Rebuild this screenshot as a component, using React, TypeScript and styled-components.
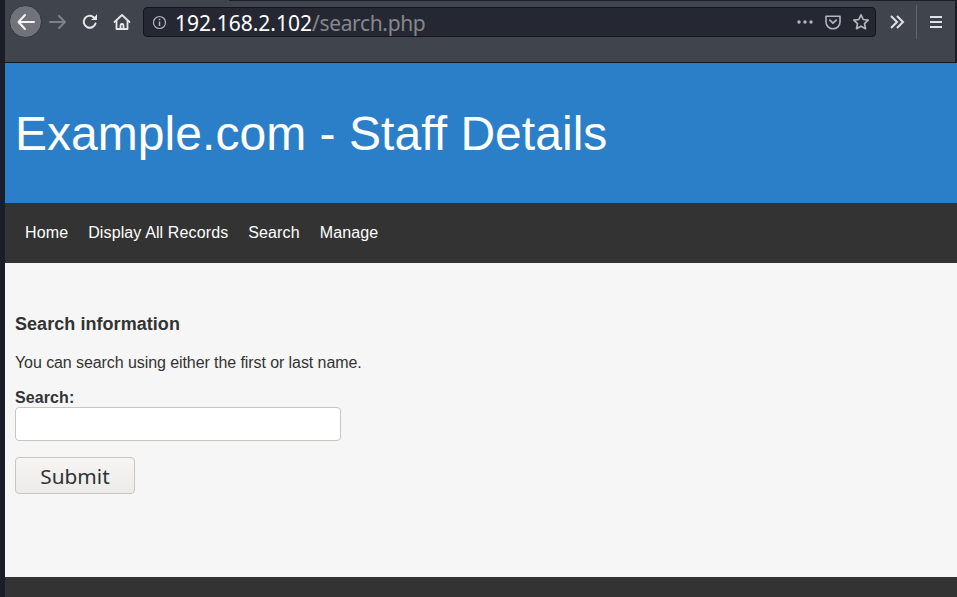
import * as React from 'react';
import styled, { createGlobalStyle } from 'styled-components';

const GlobalStyle = createGlobalStyle`
  html, body {
    margin: 0;
    padding: 0;
    height: 100%;
    background: #1b1e28;
    overflow: hidden;
  }
`;

const Frame = styled.div`
  width: 957px;
  height: 597px;
  display: flex;
  background: #1b1e28;
`;

const Edge = styled.div`
  width: 5px;
  flex: none;
`;

const Window = styled.div`
  flex: 1;
  display: flex;
  flex-direction: column;
  min-width: 0;
`;

const Toolbar = styled.div`
  height: 63px;
  flex: none;
  box-sizing: border-box;
  background: linear-gradient(to right, #40444d 224px, #1b1e28 224px) top / 100% 1px no-repeat, #40444d;
  border-bottom: 1px solid #15171d;
  border-right: 2px solid #1b1e28;
  display: flex;
  align-items: flex-start;
  padding: 5px 0 0 4px;
`;

const NavButton = styled.div<{ $size?: number; $round?: boolean }>`
  width: ${(p) => p.$size ?? 32}px;
  height: ${(p) => (p.$round ? p.$size : 34)}px;
  flex: none;
  display: flex;
  align-items: center;
  justify-content: center;
  border-radius: 50%;
  background: ${(p) => (p.$round ? '#70737a' : 'transparent')};
  border: ${(p) => (p.$round ? '1px solid #33363d' : 'none')};
  box-sizing: border-box;
  color: #e6e7e9;
`;

const UrlBar = styled.div`
  width: 733px;
  height: 30px;
  flex: none;
  margin: 2px 0 0 5px;
  box-sizing: border-box;
  background: #252833;
  border: 1px solid #14161b;
  border-radius: 4px;
  display: flex;
  align-items: center;
  padding: 0 5px 0 8px;
  color: #b4b6bb;
`;

const UrlText = styled.div`
  flex: 1;
  margin-left: 8px;
  padding-top: 2px;
  font: 21px 'Noto Sans', sans-serif;
  line-height: 28px;
  white-space: nowrap;
  color: #fff;
`;

const UrlPath = styled.span`
  color: #85878e;
  letter-spacing: -0.35px;
`;

const UrlIcons = styled.div`
  display: flex;
  align-items: center;
  gap: 11px;
`;

const Dots = styled.svg`
  margin-right: 1px;
`;

const Overflow = styled(NavButton)`
  margin-left: 5px;
`;

const Divider = styled.div`
  width: 1px;
  height: 34px;
  flex: none;
  background: #62656c;
  margin: 0 12px 0 3px;
`;

const Banner = styled.header`
  height: 140px;
  flex: none;
  background: #2b7fc9;
  display: flex;
  align-items: center;
  padding-left: 10px;
`;

const Title = styled.h1`
  margin: 0;
  font: 400 48px 'Liberation Sans', Arial, sans-serif;
  letter-spacing: 0.04px;
  color: #fff;
`;

const NavBar = styled.nav`
  height: 60px;
  flex: none;
  background: #333333;
  display: flex;
  align-items: center;
  gap: 20px;
  padding-left: 20px;
`;

const NavLink = styled.a`
  font: 16px 'Liberation Sans', Arial, sans-serif;
  letter-spacing: 0.12px;
  color: #fff;
`;

const Content = styled.main`
  flex: 1;
  background: #f6f6f6;
  padding: 51px 10px 0;
  color: #333333;
  font-family: 'Liberation Sans', Arial, sans-serif;
`;

const Heading = styled.h3`
  margin: 0;
  font-size: 18px;
  line-height: 20px;
  font-weight: 700;
  letter-spacing: 0.05px;
`;

const Lead = styled.p`
  margin: 19px 0 0;
  font-size: 16px;
  line-height: 20px;
  letter-spacing: -0.08px;
`;

const Label = styled.label`
  display: block;
  margin-top: 16px;
  font-size: 16px;
  line-height: 18px;
  font-weight: 700;
  letter-spacing: 0.1px;
`;

const TextInput = styled.input`
  display: block;
  width: 326px;
  height: 34px;
  box-sizing: border-box;
  background: #fff;
  border: 1px solid #c9c5c0;
  border-radius: 4px;
  outline: none;
`;

const SubmitButton = styled.button`
  display: block;
  width: 120px;
  height: 37px;
  margin-top: 16px;
  box-sizing: border-box;
  padding: 0;
  background: linear-gradient(#f6f5f4, #edebe9);
  border: 1px solid #c9c5c0;
  border-radius: 4px;
  font: 20.8px 'Noto Sans', sans-serif;
  color: #2e3436;
`;

const Footer = styled.footer`
  height: 20px;
  flex: none;
  background: #333333;
`;

const App = () => (
  <Frame>
    <GlobalStyle />
    <Edge />
    <Window>
      <Toolbar>
        <NavButton $round $size={33}>
          <svg width="20" height="20" viewBox="0 0 20 20" fill="none" stroke="#f4f4f5" strokeWidth="2" strokeLinecap="round" strokeLinejoin="round">
            <path d="M18 10H2.500M9 3 2.500 10 9 17" />
          </svg>
        </NavButton>
        <NavButton>
          <svg width="18" height="18" viewBox="0 0 18 18" fill="none" stroke="#7f8187" strokeWidth="2" strokeLinecap="round" strokeLinejoin="round">
            <path d="M1 9h15M10 3l6 6-6 6" />
          </svg>
        </NavButton>
        <NavButton>
          <svg width="16" height="16" viewBox="0 0 16 16" fill="none" stroke="#e6e7e9" strokeWidth="2" strokeLinecap="round" strokeLinejoin="round">
            <path d="M13.500 9.500A6 6 0 1 1 11.500 3.100L14 5" />
            <path d="M14.500 1v4.500H10" fill="#e6e7e9" strokeWidth="1" />
          </svg>
        </NavButton>
        <NavButton>
          <svg width="18" height="18" viewBox="0 0 18 18" fill="none" stroke="#e6e7e9" strokeWidth="1.800" strokeLinejoin="round" strokeLinecap="round">
            <path d="M1.500 9 9 2l7.500 7" />
            <path d="M3.500 8v8h11V8" />
            <path d="M7.500 16v-3.500a1.500 1.500 0 0 1 3 0V16" />
          </svg>
        </NavButton>
        <UrlBar>
          <svg width="15" height="15" viewBox="0 0 15 15" fill="none" stroke="#b4b6bb" strokeWidth="1.200">
            <circle cx="7.500" cy="7.500" r="6" />
            <path d="M7.500 6.500v4.500M7.500 3.800v1.400" strokeWidth="1.500" />
          </svg>
          <UrlText>
            192.168.2.102<UrlPath>/search.php</UrlPath>
          </UrlText>
          <UrlIcons>
            <Dots width="16" height="4" viewBox="0 0 16 4" fill="#b4b6bb">
              <circle cx="2" cy="2" r="1.700" />
              <circle cx="8" cy="2" r="1.700" />
              <circle cx="14" cy="2" r="1.700" />
            </Dots>
            <svg width="16" height="16" viewBox="0 0 16 16" fill="none" stroke="#b4b6bb" strokeWidth="1.600" strokeLinecap="round" strokeLinejoin="round">
              <path d="M1 2.200h14v5.800a7 6.800 0 0 1-14 0z" />
              <path d="m4.800 6.200 3.200 3 3.200-3" strokeWidth="1.800" />
            </svg>
            <svg width="18" height="18" viewBox="0 0 18 18" fill="none" stroke="#b4b6bb" strokeWidth="1.700" strokeLinejoin="round">
              <path d="m9 1.800 2.200 4.700 5 .6-3.700 3.500 1 5.100L9 13.200l-4.500 2.500 1-5.100L1.800 7.100l5-.6z" />
            </svg>
          </UrlIcons>
        </UrlBar>
        <Overflow>
          <svg width="16" height="14" viewBox="0 0 16 14" fill="none" stroke="#e0e1e4" strokeWidth="2" strokeLinejoin="miter">
            <path d="m2 1 6 6-6 6M8 1l6 6-6 6" />
          </svg>
        </Overflow>
        <Divider />
        <NavButton $size={14}>
          <svg width="14" height="12" viewBox="0 0 14 12" fill="none" stroke="#e0e1e4" strokeWidth="2">
            <path d="M1 1h12M1 6h12M1 11h12" />
          </svg>
        </NavButton>
      </Toolbar>
      <Banner>
        <Title>Example.com - Staff Details</Title>
      </Banner>
      <NavBar>
        <NavLink>Home</NavLink>
        <NavLink>Display All Records</NavLink>
        <NavLink>Search</NavLink>
        <NavLink>Manage</NavLink>
      </NavBar>
      <Content>
        <Heading>Search information</Heading>
        <Lead>You can search using either the first or last name.</Lead>
        <Label>Search:</Label>
        <TextInput type="text" />
        <SubmitButton type="button">Submit</SubmitButton>
      </Content>
      <Footer />
    </Window>
  </Frame>
);

export default App;
